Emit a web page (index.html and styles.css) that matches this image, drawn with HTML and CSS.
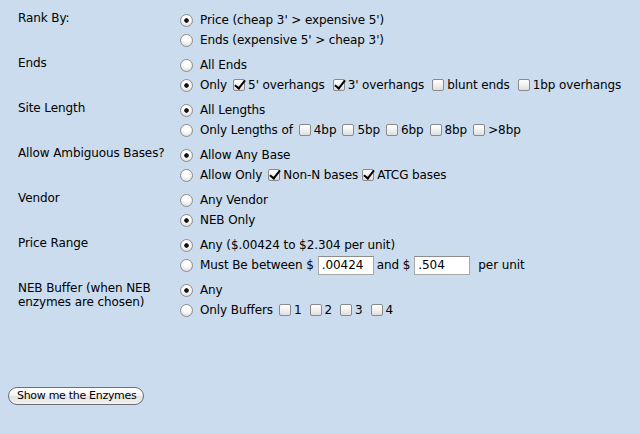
FILE: index.html
```html
<!DOCTYPE html>
<html>
<head>
<meta charset="utf-8">
<title>Enzyme search</title>
<link rel="stylesheet" href="styles.css">
</head>
<body>
<form class="search">
  <div class="groups">
    <div class="group">
      <div class="label">Rank By:</div>
      <div class="controls">
        <div class="line"><input class="radio" type="radio" name="rank" checked><span>Price (cheap 3' &gt; expensive 5')</span></div>
        <div class="line"><input class="radio" type="radio" name="rank"><span>Ends (expensive 5' &gt; cheap 3')</span></div>
      </div>
    </div>
    <div class="group">
      <div class="label">Ends</div>
      <div class="controls">
        <div class="line"><input class="radio" type="radio" name="ends"><span>All Ends</span></div>
        <div class="line"><input class="radio" type="radio" name="ends" checked><span>Only</span><input class="check first" type="checkbox" checked><span>5' overhangs</span><input class="check" type="checkbox" checked><span>3' overhangs</span><input class="check" type="checkbox"><span>blunt ends</span><input class="check" type="checkbox"><span>1bp overhangs</span></div>
      </div>
    </div>
    <div class="group">
      <div class="label">Site Length</div>
      <div class="controls">
        <div class="line"><input class="radio" type="radio" name="len" checked><span>All Lengths</span></div>
        <div class="line"><input class="radio" type="radio" name="len"><span>Only Lengths of</span><input class="check first" type="checkbox"><span>4bp</span><input class="check first" type="checkbox"><span>5bp</span><input class="check first" type="checkbox"><span>6bp</span><input class="check first" type="checkbox"><span>8bp</span><input class="check first" type="checkbox"><span>&gt;8bp</span></div>
      </div>
    </div>
    <div class="group">
      <div class="label">Allow Ambiguous Bases?</div>
      <div class="controls">
        <div class="line"><input class="radio" type="radio" name="amb" checked><span>Allow Any Base</span></div>
        <div class="line"><input class="radio" type="radio" name="amb"><span>Allow Only</span><input class="check first" type="checkbox" checked><span>Non-N bases</span><input class="check tight" type="checkbox" checked><span>ATCG bases</span></div>
      </div>
    </div>
    <div class="group">
      <div class="label">Vendor</div>
      <div class="controls">
        <div class="line"><input class="radio" type="radio" name="vendor"><span>Any Vendor</span></div>
        <div class="line"><input class="radio" type="radio" name="vendor" checked><span>NEB Only</span></div>
      </div>
    </div>
    <div class="group">
      <div class="label">Price Range</div>
      <div class="controls">
        <div class="line"><input class="radio" type="radio" name="price" checked><span>Any ($.00424 to $2.304 per unit)</span></div>
        <div class="line"><input class="radio" type="radio" name="price"><span>Must Be between $</span><input class="field" type="text" value=".00424"><span>and $</span><input class="field" type="text" value=".504"><span class="unit">per unit</span></div>
      </div>
    </div>
    <div class="group">
      <div class="label">NEB Buffer (when NEB enzymes are chosen)</div>
      <div class="controls">
        <div class="line"><input class="radio" type="radio" name="buffer" checked><span>Any</span></div>
        <div class="line"><input class="radio" type="radio" name="buffer"><span>Only Buffers</span><input class="check first" type="checkbox"><span>1</span><input class="check" type="checkbox"><span>2</span><input class="check" type="checkbox"><span>3</span><input class="check" type="checkbox"><span>4</span></div>
      </div>
    </div>
  </div>
  <div class="actions"><button class="submit" type="button">Show me the Enzymes</button></div>
</form>
</body>
</html>
```
FILE: styles.css
```css
html, body {
  background: #cadcee;
}
body {
  margin: 8px;
  font-family: "DejaVu Sans", Verdana, sans-serif;
  font-size: 12px;
  letter-spacing: -0.1px;
  color: #000;
}
.search {
  margin: 0;
}
.groups {
  display: flex;
  flex-direction: column;
  gap: 5px;
  padding: 2px 0 0 10px;
}
.group {
  display: grid;
  grid-template-columns: 162px auto;
}
.label {
  padding-top: 1px;
  padding-right: 8px;
  line-height: 14px;
}
.controls {
  display: flex;
  flex-direction: column;
}
.line {
  display: flex;
  align-items: center;
  height: 20px;
  white-space: nowrap;
}
.radio {
  appearance: none;
  -webkit-appearance: none;
  box-sizing: border-box;
  width: 13px;
  height: 13px;
  margin: 0 7px 0 0;
  border-radius: 50%;
  border: 1px solid #8e8e8e;
  background: radial-gradient(circle at 50% 30%, #ffffff 0 35%, #eeeeee 60%, #d2d2d2 100%);
}
.radio:checked {
  background:
    radial-gradient(circle at 50% 50%, #111 0 1.9px, transparent 2.6px),
    radial-gradient(circle at 50% 30%, #ffffff 0 35%, #eeeeee 60%, #d2d2d2 100%);
}
.check {
  appearance: none;
  -webkit-appearance: none;
  position: relative;
  box-sizing: border-box;
  width: 12px;
  height: 12px;
  margin: 0 3px 0 8px;
  border-radius: 2px;
  border: 1px solid #8a8a8a;
  background: linear-gradient(#ffffff, #f1f1f1 50%, #dedede);
}
.check.first {
  margin-left: 6px;
}
.check.tight {
  margin-left: 4px;
}
.check:checked::after {
  content: "";
  position: absolute;
  left: 3px;
  top: -2px;
  width: 4px;
  height: 9px;
  border-right: 2.5px solid #000;
  border-bottom: 2.5px solid #000;
  transform: rotate(38deg);
}
.field {
  box-sizing: border-box;
  width: 56px;
  height: 19px;
  margin: 0 3px 0 4px;
  padding: 0 3px;
  border: 1px solid #a9a9a9;
  border-top-color: #8c8c8c;
  background: #fff;
  font-family: "DejaVu Sans", Verdana, sans-serif;
  font-size: 12px;
  letter-spacing: -0.1px;
  color: #000;
}
.unit {
  margin-left: 5px;
}
.actions {
  margin-top: 67px;
}
.submit {
  box-sizing: border-box;
  height: 18px;
  margin: 0;
  padding: 0 7px 0 8px;
  border: 1px solid #6f6f6f;
  border-radius: 9px;
  background: linear-gradient(#ffffff, #f4f4f4 45%, #e2e2e2 55%, #f2f2f2);
  font-family: "DejaVu Sans", Verdana, sans-serif;
  font-size: 11px;
  letter-spacing: -0.3px;
  line-height: 16px;
  color: #000;
}
```
